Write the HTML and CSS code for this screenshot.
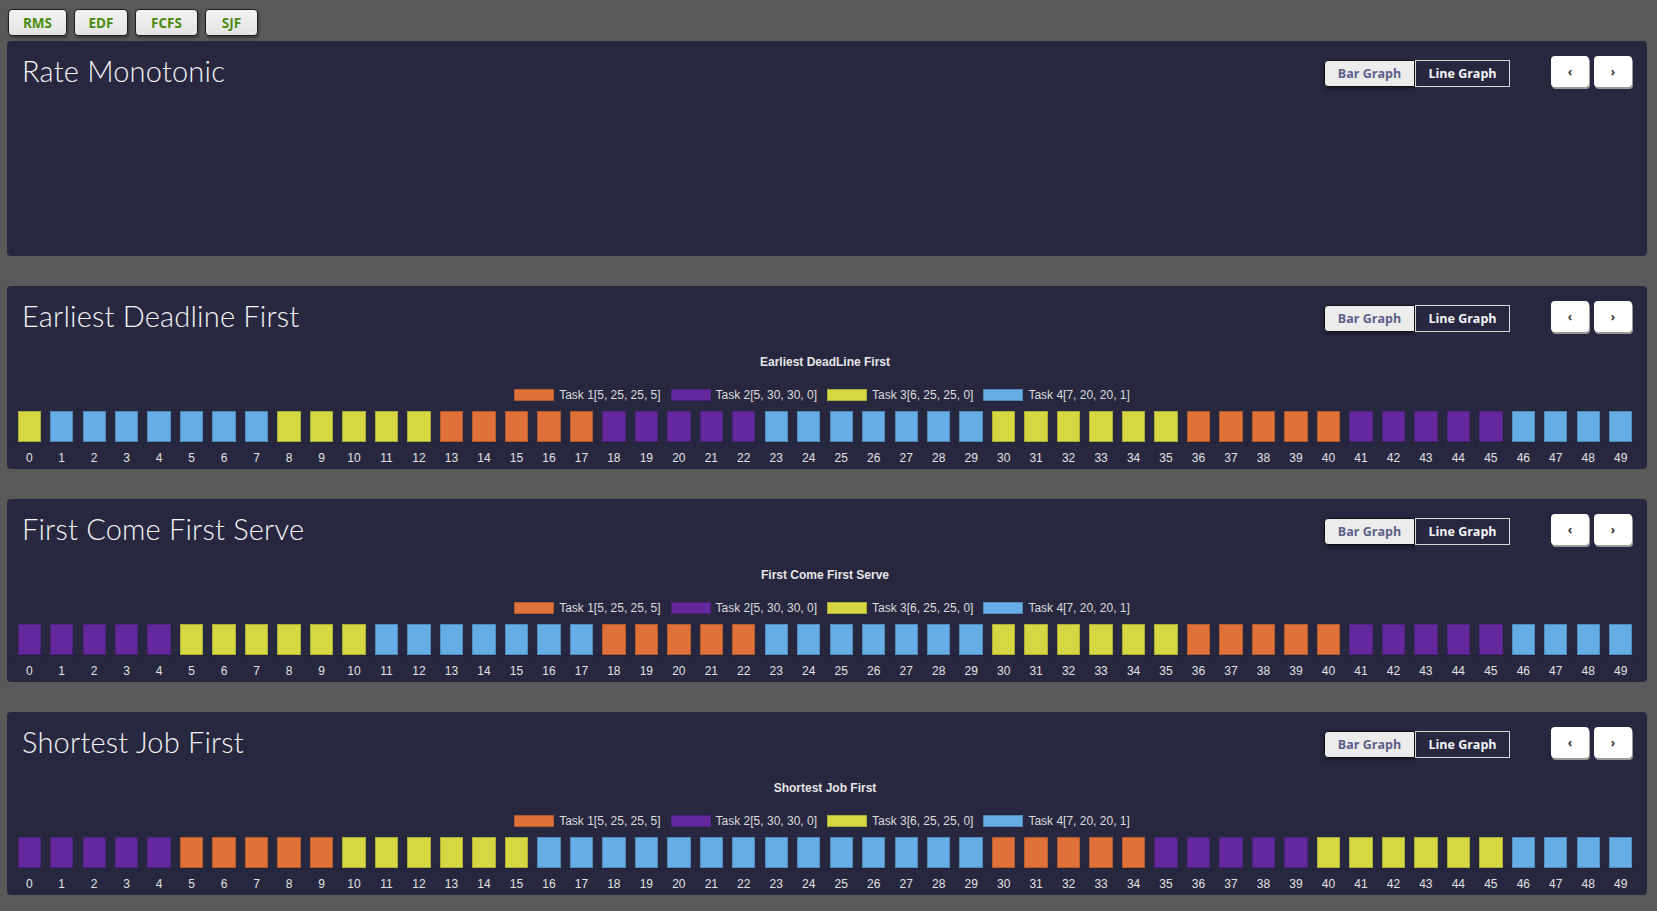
FILE: index.html
```html
<!DOCTYPE html>
<html lang="en">
<head>
<meta charset="utf-8">
<title>Scheduling</title>
<link rel="stylesheet" href="styles.css">
</head>
<body>
<nav class="nav">
  <button class="nav-btn">RMS</button>
  <button class="nav-btn">EDF</button>
  <button class="nav-btn">FCFS</button>
  <button class="nav-btn">SJF</button>
</nav>
<main class="cards">
  <section class="card card-empty">
    <header class="card-head">
      <h2 class="card-title">Rate Monotonic</h2>
      <div class="controls">
        <div class="toggle"><button class="tg tg-on">Bar Graph</button><button class="tg tg-off">Line Graph</button></div>
        <div class="pager"><button class="pg">&#8249;</button><button class="pg">&#8250;</button></div>
      </div>
    </header>
  </section>

  <section class="card">
    <header class="card-head">
      <h2 class="card-title">Earliest Deadline First</h2>
      <div class="controls">
        <div class="toggle"><button class="tg tg-on">Bar Graph</button><button class="tg tg-off">Line Graph</button></div>
        <div class="pager"><button class="pg">&#8249;</button><button class="pg">&#8250;</button></div>
      </div>
    </header>
    <div class="chart" data-seq="YBBBBBBBYYYYYOOOOOPPPPPBBBBBBBYYYYYYOOOOOPPPPPBBBB">
      <div class="chart-title">Earliest DeadLine First</div>
      <ul class="legend">
        <li><i class="lg o"></i>Task 1[5, 25, 25, 5]</li>
        <li><i class="lg p"></i>Task 2[5, 30, 30, 0]</li>
        <li><i class="lg y"></i>Task 3[6, 25, 25, 0]</li>
        <li><i class="lg b"></i>Task 4[7, 20, 20, 1]</li>
      </ul>
      <div class="plot"></div>
    </div>
  </section>

  <section class="card">
    <header class="card-head">
      <h2 class="card-title">First Come First Serve</h2>
      <div class="controls">
        <div class="toggle"><button class="tg tg-on">Bar Graph</button><button class="tg tg-off">Line Graph</button></div>
        <div class="pager"><button class="pg">&#8249;</button><button class="pg">&#8250;</button></div>
      </div>
    </header>
    <div class="chart" data-seq="PPPPPYYYYYYBBBBBBBOOOOOBBBBBBBYYYYYYOOOOOPPPPPBBBB">
      <div class="chart-title">First Come First Serve</div>
      <ul class="legend">
        <li><i class="lg o"></i>Task 1[5, 25, 25, 5]</li>
        <li><i class="lg p"></i>Task 2[5, 30, 30, 0]</li>
        <li><i class="lg y"></i>Task 3[6, 25, 25, 0]</li>
        <li><i class="lg b"></i>Task 4[7, 20, 20, 1]</li>
      </ul>
      <div class="plot"></div>
    </div>
  </section>

  <section class="card">
    <header class="card-head">
      <h2 class="card-title">Shortest Job First</h2>
      <div class="controls">
        <div class="toggle"><button class="tg tg-on">Bar Graph</button><button class="tg tg-off">Line Graph</button></div>
        <div class="pager"><button class="pg">&#8249;</button><button class="pg">&#8250;</button></div>
      </div>
    </header>
    <div class="chart" data-seq="PPPPPOOOOOYYYYYYBBBBBBBBBBBBBBOOOOOPPPPPYYYYYYBBBB">
      <div class="chart-title">Shortest Job First</div>
      <ul class="legend">
        <li><i class="lg o"></i>Task 1[5, 25, 25, 5]</li>
        <li><i class="lg p"></i>Task 2[5, 30, 30, 0]</li>
        <li><i class="lg y"></i>Task 3[6, 25, 25, 0]</li>
        <li><i class="lg b"></i>Task 4[7, 20, 20, 1]</li>
      </ul>
      <div class="plot"></div>
    </div>
  </section>
</main>
<script src="script.js"></script>
</body>
</html>
```

FILE: script.js
```js
document.querySelectorAll('.chart').forEach(function (chart) {
  var seq = chart.getAttribute('data-seq');
  var plot = chart.querySelector('.plot');
  var map = { O: 'o', P: 'p', Y: 'y', B: 'b' };
  for (var i = 0; i < seq.length; i++) {
    var col = document.createElement('div');
    col.className = 'col';
    var bar = document.createElement('i');
    bar.className = 'bar ' + map[seq[i]];
    var tick = document.createElement('span');
    tick.className = 'tick';
    var lab = document.createElement('span');
    lab.className = 'lab';
    lab.textContent = String(i);
    col.appendChild(bar);
    col.appendChild(tick);
    col.appendChild(lab);
    plot.appendChild(col);
  }
});
```

FILE: styles.css
```css
* { box-sizing: border-box; }
html, body { margin: 0; padding: 0; }
body {
  background: #595959;
  font-family: "Open Sans", "Liberation Sans", sans-serif;
}
button { font-family: inherit; cursor: pointer; }

.nav {
  display: flex;
  gap: 7px;
  padding: 9px 8px 0 8px;
}
.nav-btn {
  height: 27px;
  padding: 0 10px;
  background: linear-gradient(#f2f2f2, #e4e4e4);
  border: 1px solid #1e1e1e;
  border-radius: 4px;
  color: #4b8c10;
  font-weight: 700;
  font-size: 13.5px;
  box-shadow: 1px 2px 3px rgba(0,0,0,0.35);
}
.nav-btn:nth-child(1) { width: 59px; }
.nav-btn:nth-child(2) { width: 54px; }
.nav-btn:nth-child(3) { width: 63px; }
.nav-btn:nth-child(4) { width: 53px; }

.cards {
  display: flex;
  flex-direction: column;
  gap: 30px;
  margin: 5px 10px 0 7px;
}
.card {
  background: #272840;
  border-radius: 4px;
  height: 183px;
}
.card-empty { height: 215px; }

.card-head {
  display: flex;
  justify-content: space-between;
  align-items: flex-start;
  padding: 10px 15px 0 15px;
}
.card-title {
  margin: 1px 0 0 0;
  font-family: "Lato", "Open Sans", sans-serif;
  font-size: 29px;
  line-height: 37px;
  font-weight: 300;
  color: #f4f4f4;
  letter-spacing: 0.2px;
}
.controls {
  display: flex;
  align-items: flex-start;
  gap: 41px;
}
.toggle {
  display: flex;
  margin-top: 9px;
}
.tg {
  height: 27px;
  font-size: 12.5px;
  font-weight: 700;
  padding: 0;
}
.tg-on {
  width: 91px;
  background: #ececec;
  color: #5b6089;
  border: 1px solid #111;
  border-radius: 4px 0 0 4px;
  box-shadow: 0 2px 4px rgba(0,0,0,0.4);
}
.tg-off {
  width: 95px;
  background: transparent;
  color: #f4f4f4;
  border: 1px solid #d8d8d8;
}
.pager {
  display: flex;
  gap: 5px;
  margin-top: 5px;
}
.pg {
  width: 38px;
  height: 31px;
  background: #fff;
  border: none;
  border-radius: 4px;
  box-shadow: 1px 2px 0 #9a9a9a;
  color: #333;
  font-size: 12px;
  font-weight: 700;
  line-height: 1;
  padding: 0;
}

.chart {
  margin: 0 10px 0 6px;
  font-family: "Liberation Sans", Arial, sans-serif;
}
.chart-title {
  margin-top: 20px;
  height: 16px;
  line-height: 16px;
  text-align: center;
  font-size: 12px;
  font-weight: 700;
  color: #e6e6e6;
}
.legend {
  list-style: none;
  margin: 17px 0 0 0;
  padding: 0;
  height: 16px;
  display: flex;
  justify-content: center;
  gap: 10px;
  padding-right: 6px;
}
.legend li {
  display: flex;
  align-items: center;
  gap: 5px;
  font-size: 12px;
  line-height: 16px;
  color: #dcdcdc;
}
.lg {
  display: block;
  width: 40px;
  height: 12px;
  border: 1px solid rgba(0,0,0,0.2);
}

.plot {
  margin-top: 8px;
  display: grid;
  grid-template-columns: repeat(50, 1fr);
}
.col {
  display: flex;
  flex-direction: column;
  align-items: center;
}
.bar {
  display: block;
  width: 72%;
  height: 31px;
  border: 1px solid rgba(0,0,0,0.2);
}
.tick {
  display: block;
  width: 100%;
  height: 8px;
  border-top: 1px solid rgba(0,0,0,0.12);
  border-left: 1px solid rgba(0,0,0,0.12);
}
.col:last-child .tick { border-right: 1px solid rgba(0,0,0,0.12); }
.lab {
  display: block;
  margin-top: 1px;
  font-size: 12px;
  line-height: 14px;
  color: #e2e2e2;
}

.o { background: #e07139; }
.p { background: #63289d; }
.y { background: #d5d843; }
.b { background: #65aee5; }
```
